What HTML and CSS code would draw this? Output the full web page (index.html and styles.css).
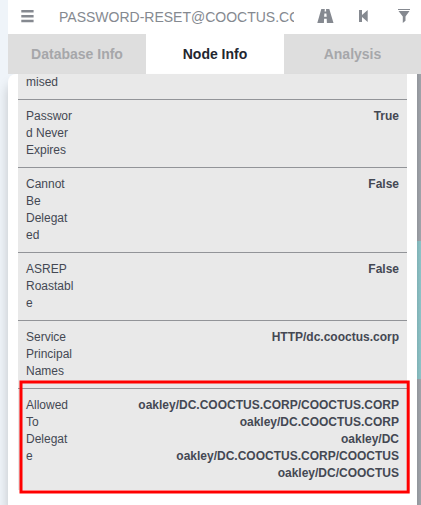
FILE: index.html
```html
<!DOCTYPE html>
<html lang="en">
<head>
<meta charset="utf-8">
<title>Node Info</title>
<link rel="stylesheet" href="styles.css">
</head>
<body>
<div class="app">
  <header class="search">
    <svg class="menu" width="13" height="13" viewBox="0 0 13 13"><path d="M.3 0h12.3v2.5H.3zM.3 4.9h12.3v2.5H.3zM.3 9.8h12.3v2.5H.3z"/></svg>
    <div class="query">PASSWORD-RESET@COOCTUS.CORP</div>
    <svg class="road" width="17" height="14" viewBox="0 0 17 14"><path d="M4.3 0H7.8L7.6 2.5H9.2L9 0H12.3L16.5 14H9.9L9.7 9.7H7.1L6.9 14H.3zM7.4 4.4L7.1 7.8H9.7L9.4 4.4z"/></svg>
    <svg class="back" width="9" height="12" viewBox="0 0 9 12"><path d="M0 0H3V5L8.7 0V12L3 7V12H0z"/></svg>
    <svg class="filter" width="12" height="14" viewBox="0 0 12 14"><path d="M0 0H12V1H0zM.5 2H11.5L7.5 7.5V11.8L4.8 14V7.5z"/></svg>
  </header>
  <nav class="tabs">
    <div class="tab">Database Info</div>
    <div class="tab active">Node Info</div>
    <div class="tab">Analysis</div>
  </nav>
  <div class="body">
    <main class="panel">
      <div class="row first"><div class="key">mised</div></div>
      <div class="row"><div class="key">Passwor<br>d Never<br>Expires</div><div class="value">True</div></div>
      <div class="row"><div class="key">Cannot<br>Be<br>Delegat<br>ed</div><div class="value">False</div></div>
      <div class="row"><div class="key">ASREP<br>Roastabl<br>e</div><div class="value">False</div></div>
      <div class="row"><div class="key">Service<br>Principal<br>Names</div><div class="value">HTTP/dc.cooctus.corp</div></div>
      <div class="row"><div class="key">Allowed<br>To<br>Delegat<br>e</div><div class="value">oakley/DC.COOCTUS.CORP/COOCTUS.CORP<br>oakley/DC.COOCTUS.CORP<br>oakley/DC<br>oakley/DC.COOCTUS.CORP/COOCTUS<br>oakley/DC/COOCTUS</div></div>
    </main>
    <div class="scroll"><div class="thumb"></div></div>
  </div>
  <svg class="highlight" width="392" height="115" viewBox="0 0 392 115"><rect x="2" y="2" width="387.2" height="110"/></svg>
</div>
</body>
</html>
```
FILE: styles.css
```css
* { box-sizing: border-box; }
body {
  margin: 0;
  background: #eff4f9;
  font: 12px/17px "Liberation Sans", Arial, sans-serif;
  color: #444853;
}
.app {
  position: relative;
  height: 505px;
  padding-left: 8px;
  overflow: hidden;
  display: flex;
  flex-direction: column;
}
.search {
  height: 34px;
  flex: none;
  display: flex;
  align-items: flex-start;
  padding: 9px 0 0 13px;
  background: #fff;
  fill: #858990;
}
.search svg { flex: none; }
.menu { margin-top: 1px; }
.query {
  width: 235px;
  margin-left: 25px;
  overflow: hidden;
  white-space: nowrap;
  font-size: 14px;
  line-height: 17px;
  color: #858990;
}
.road { margin-left: 23px; }
.back { margin: 1px 0 0 25px; }
.filter { margin-left: 30px; }
.tabs {
  height: 40px;
  flex: none;
  display: grid;
  grid-template-columns: 138px 138px 137px;
  background: #dedede;
}
.tab {
  font-size: 14px;
  font-weight: bold;
  line-height: 40px;
  text-align: center;
  color: #a6a7aa;
}
.active { background: #fff; color: #23262f; }
.body { flex: 1; display: flex; }
.panel {
  width: 409px;
  padding: 0 10px;
  background: #fff;
  border-top-left-radius: 8px;
  box-shadow: 0 10px 12px rgba(0, 0, 0, .2);
}
.row {
  display: flex;
  justify-content: space-between;
  padding: 8px;
  border-top: 1px solid #929498;
  background: #e9e9e9;
}
.first { padding-top: 0; border-top: 0; }
.value { text-align: right; font-weight: bold; }
.scroll {
  position: relative;
  width: 4px;
  padding-top: 167px;
  background: linear-gradient(90deg, #92959b, #a0a4aa);
}
.thumb { height: 138px; background: linear-gradient(90deg, #80b2b6, #8ec3c7); }
.highlight { position: absolute; left: 19px; top: 380px; }
.highlight rect { fill: none; stroke: #f00; stroke-width: 3; }
```
